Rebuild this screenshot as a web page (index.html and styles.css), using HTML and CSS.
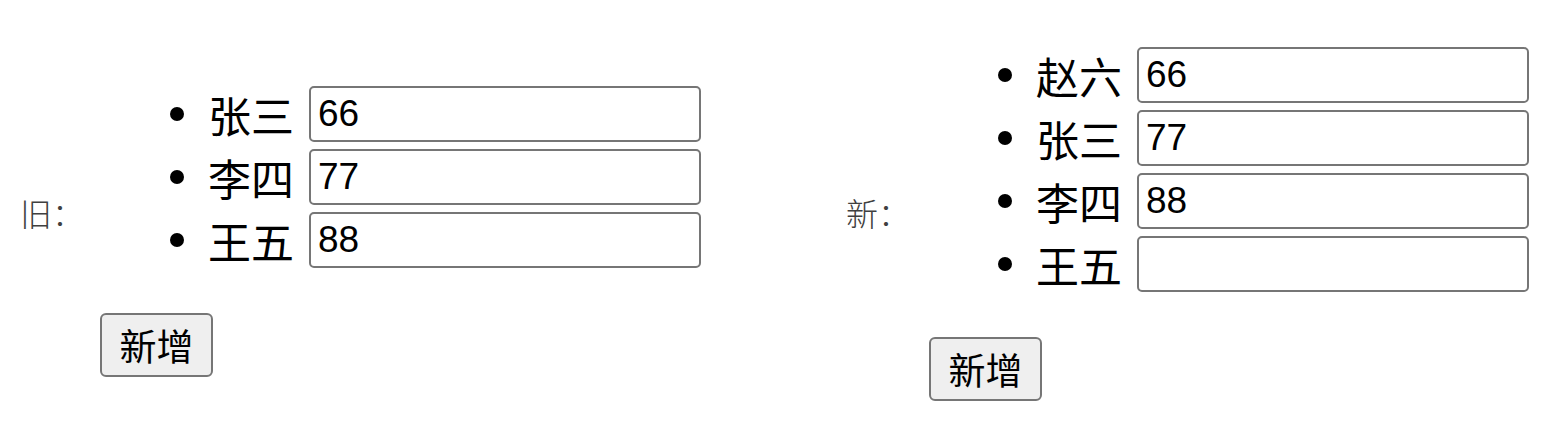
FILE: index.html
```html
<!DOCTYPE html>
<html lang="zh-CN">
<head>
<meta charset="utf-8">
<title>列表</title>
<link rel="stylesheet" href="styles.css">
</head>
<body>
<main class="page">
  <section class="group group-old">
    <div class="label">旧：</div>
    <div class="column">
      <ul class="list">
        <li class="item"><span class="name">张三</span><input class="field" type="text" value="66"></li>
        <li class="item"><span class="name">李四</span><input class="field" type="text" value="77"></li>
        <li class="item"><span class="name">王五</span><input class="field" type="text" value="88"></li>
      </ul>
      <button class="add" type="button">新增</button>
    </div>
  </section>
  <section class="group group-new">
    <div class="label">新：</div>
    <div class="column">
      <ul class="list">
        <li class="item"><span class="name">赵六</span><input class="field" type="text" value="66"></li>
        <li class="item"><span class="name">张三</span><input class="field" type="text" value="77"></li>
        <li class="item"><span class="name">李四</span><input class="field" type="text" value="88"></li>
        <li class="item"><span class="name">王五</span><input class="field" type="text" value=""></li>
      </ul>
      <button class="add" type="button">新增</button>
    </div>
  </section>
</main>
</body>
</html>
```

FILE: styles.css
```css
html, body {
  margin: 0;
  padding: 0;
  background: #ffffff;
}

body {
  font-family: "Noto Sans CJK SC", "Noto Sans", sans-serif;
  color: #000;
}

.page {
  display: flex;
  align-items: flex-start;
  padding-left: 20px;
  width: 1566px;
  height: 428px;
  box-sizing: border-box;
}

.group {
  display: flex;
  align-items: flex-start;
}

.group-new {
  margin-left: 145px;
}

.label {
  width: 80px;
  margin-top: 196px;
  font-size: 32px;
  line-height: 32px;
  font-weight: 300;
  color: #404040;
  white-space: nowrap;
}

.group-new .label {
  width: 83px;
}

.column {
  display: flex;
  flex-direction: column;
  align-items: flex-start;
}

.group-old .column {
  margin-top: 86px;
}

.group-new .column {
  margin-top: 47px;
}

.list {
  list-style: none;
  margin: 0;
  padding: 0 0 0 70px;
  display: flex;
  flex-direction: column;
  gap: 7px;
}

.group-new .list {
  padding-left: 69px;
}

.item {
  display: flex;
  align-items: center;
  height: 56px;
}

.item::before {
  content: "";
  width: 14px;
  height: 14px;
  border-radius: 50%;
  background: #000;
  margin-right: 24px;
  flex: none;
}

.name {
  width: 86px;
  font-size: 43px;
  line-height: 56px;
  white-space: nowrap;
}

.field {
  margin: 0 0 0 15px;
  width: 392px;
  height: 56px;
  box-sizing: border-box;
  border: 2px solid #767676;
  border-radius: 5px;
  padding: 0 7px;
  font-family: "Liberation Sans", Arial, sans-serif;
  font-size: 37px;
  color: #000;
  background: #fff;
  outline: none;
}

.add {
  margin-top: 45px;
  width: 113px;
  height: 64px;
  box-sizing: border-box;
  border: 2px solid #767676;
  border-radius: 6px;
  background: #efefef;
  font-family: "Noto Sans CJK SC", "Noto Sans", sans-serif;
  font-size: 37px;
  line-height: 1;
  color: #000;
  padding: 0;
}
```
